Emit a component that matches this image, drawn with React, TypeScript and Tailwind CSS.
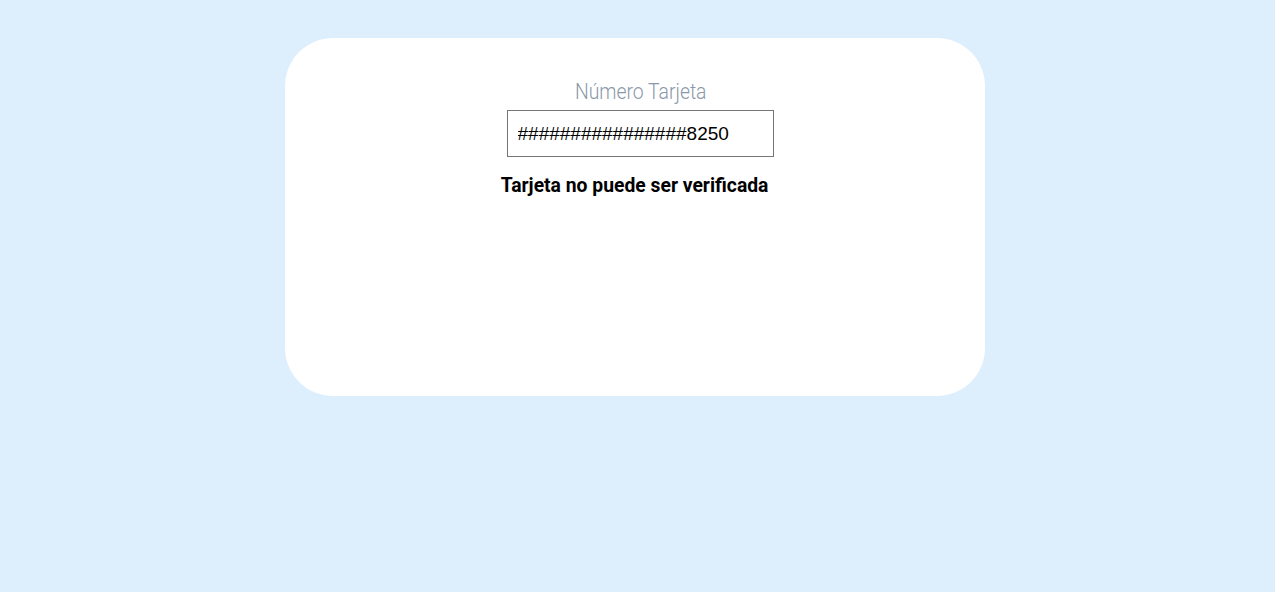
export default function App() {
  return (
    <div className="flex min-h-[592px] w-full justify-center bg-[#ddeefc] pt-[38px] pr-[5px]">
      <div className="flex h-[358px] w-[700px] flex-col items-center rounded-[48px] bg-white pt-[40px]">
        <div className="ml-[12px] scale-x-[0.88] font-['Roboto',sans-serif] text-[22px] font-light leading-[28px] text-[#8a98a8]">
          Número Tarjeta
        </div>
        <input
          readOnly
          value="################8250"
          className="mt-[4px] ml-[10px] h-[47px] w-[267px] border border-[#767676] px-[10px] font-['Liberation_Sans',Arial,sans-serif] text-[19px] text-black outline-none"
        />
        <div className="mt-[14px] scale-x-[0.92] font-['Roboto',sans-serif] text-[21px] font-bold leading-[28px] text-black">
          Tarjeta no puede ser verificada
        </div>
      </div>
    </div>
  );
}
